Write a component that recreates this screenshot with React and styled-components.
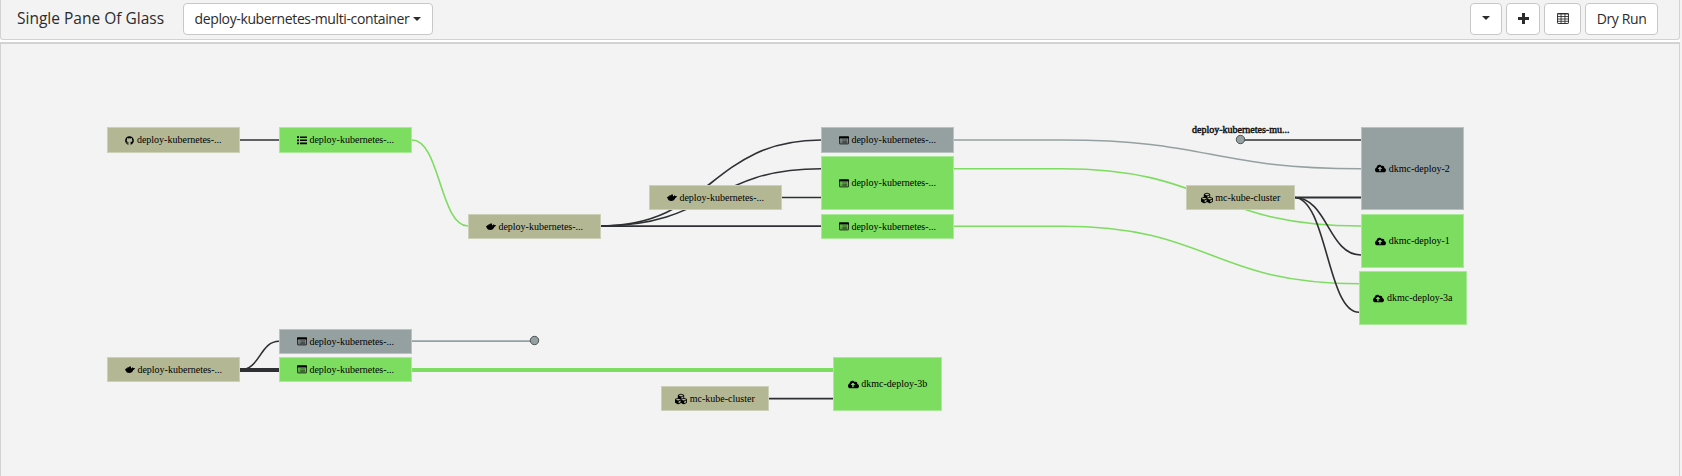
import React from "react";
import styled, { createGlobalStyle } from "styled-components";
import { FaGithub, FaCubes, FaCloudUploadAlt } from "react-icons/fa";

const GlobalStyle = createGlobalStyle`
  * { box-sizing: border-box; }
  body { margin: 0; background: #f3f3f3; overflow: hidden; }
`;

const palette = { material: "#b3b794", passed: "#7ddd60", idle: "#95a1a0", ink: "#2f3033" };

const Page = styled.div`
  width: 1682px;
  height: 476px;
  display: flex;
  flex-direction: column;
  padding-right: 2px;
  background: #f3f3f3;
  font-family: "Open Sans", sans-serif;
  color: #2b2b2b;
`;

const Toolbar = styled.header`
  height: 40px;
  flex: none;
  display: flex;
  align-items: flex-start;
  padding: 3px 21px 0 16px;
  border: solid #d2d2d2;
  border-width: 0 1px 1px 1px;
  border-radius: 0 0 4px 4px;
`;

const Divider = styled.div`
  height: 2px;
  flex: none;
  background: #fff;
`;

const Title = styled.h1`
  margin: 0;
  width: 166px;
  font-size: 15.5px;
  font-weight: 400;
  line-height: 31px;
  white-space: nowrap;
`;

const Button = styled.button`
  width: ${(p) => p.$width}px;
  height: 32px;
  padding: 0 0 ${(p) => (p.$icon ? 2 : 0)}px;
  display: flex;
  align-items: center;
  justify-content: center;
  gap: 4px;
  border: 1px solid #c8c8c8;
  border-radius: 4px;
  background: #fff;
  color: #2b2b2b;
  font: 400 14px/30px "Open Sans", sans-serif;
  letter-spacing: -0.38px;
  white-space: nowrap;
`;

const Actions = styled.div`
  display: flex;
  gap: 4px;
  margin-left: auto;
`;

const Canvas = styled.main`
  position: relative;
  flex: 1;
  border: solid #d2d2d2;
  border-width: 2px 1px 0 1px;
`;

const Edges = styled.svg`
  position: absolute;
  left: -1px;
  top: -44px;
  fill: none;
`;

const Node = styled.div`
  position: absolute;
  left: ${(p) => p.$x - 1}px;
  top: ${(p) => p.$y - 44}px;
  width: ${(p) => p.$w}px;
  height: ${(p) => p.$h}px;
  display: flex;
  align-items: center;
  justify-content: center;
  gap: 2.5px;
  background: ${(p) => palette[p.$kind]};
  border: 1px solid rgba(255, 255, 255, 0.35);
  color: #000;
  font: 10px/12px "Liberation Serif", serif;
  white-space: nowrap;
`;

const DotLabel = styled.div`
  position: absolute;
  left: 1191px;
  top: 80px;
  color: #111;
  font: 10px/12px "Liberation Serif", serif;
  -webkit-text-stroke: 0.45px #111;
  white-space: nowrap;
`;

const Caret = () => (
  <svg width="8" height="4" viewBox="0 0 8 4"><path d="M0 0h8L4 4z" fill="currentColor" /></svg>
);

const Plus = () => (
  <svg width="11" height="11" viewBox="0 0 11 11"><path d="M4 0h3v4h4v3H7v4H4V7H0V4h4z" fill="currentColor" /></svg>
);

const TableIcon = () => (
  <svg width="12" height="11" viewBox="0 0 13 11" preserveAspectRatio="none" fill="none" stroke="currentColor">
    <rect x="0.6" y="0.5" width="11.8" height="10" rx="0.6" />
    <path d="M0 1h13M0 3.5h13M0 6h13M0 8.3h13M4.4 0v11M8.6 0v11" strokeWidth="0.9" />
  </svg>
);

const ListIcon = () => (
  <svg width="10" height="9" viewBox="0 0 10 9"><path d="M0 0.3h2v1.8H0zM0 3.4h2v1.8H0zM0 6.5h2v1.8H0zM3 0.4h7v1.6H3zM3 3.5h7v1.6H3zM3 6.6h7v1.6H3z" /></svg>
);

const PipelineIcon = () => (
  <svg width="10" height="9" viewBox="0 0 10 9">
    <rect x="0.4" y="0.9" width="9.2" height="7" rx="0.5" fill="none" stroke="#000" strokeWidth="0.8" />
    <path d="M0 0.5h10v2H0z" />
    <path d="M1.5 3.9h1M3.2 3.9h5.2M1.5 5.3h1M3.2 5.3h5.2M1.5 6.7h1M3.2 6.7h5.2" stroke="#000" strokeWidth="0.8" opacity="0.8" />
  </svg>
);

const WhaleIcon = () => (
  <svg width="10" height="8" viewBox="0 0 10 8">
    <path d="M0 3.4 1.4 2.2h1V1.2h1.8V0.4h1.8v1.8h1L7.5 1l.7 1.1L10 1.9 9.4 3.3 8.3 3.9C7.7 5.8 6.3 6.9 4.2 6.9 2.5 6.9 1.3 6.2.9 4.9z" />
  </svg>
);

const icons = {
  github: <FaGithub size={9} />,
  list: <ListIcon />,
  pipeline: <PipelineIcon />,
  whale: <WhaleIcon />,
  cubes: <FaCubes size={12} />,
  cloud: <FaCloudUploadAlt size={11} />,
};

const short = "deploy-kubernetes-...";

const nodes = [
  [107, 127, 133, 26, "material", "github", short],
  [279, 127, 133, 26, "passed", "list", short],
  [468, 214, 133, 25, "material", "whale", short],
  [649, 185, 133, 25, "material", "whale", short],
  [821, 127, 133, 26, "idle", "pipeline", short],
  [821, 156, 133, 54, "passed", "pipeline", short],
  [821, 214, 133, 25, "passed", "pipeline", short],
  [1186, 185, 109, 25, "material", "cubes", "mc-kube-cluster"],
  [1361, 127, 103, 83, "idle", "cloud", "dkmc-deploy-2"],
  [1361, 214, 103, 54, "passed", "cloud", "dkmc-deploy-1"],
  [1359, 271, 108, 54, "passed", "cloud", "dkmc-deploy-3a"],
  [107, 357, 133, 25, "material", "whale", short],
  [279, 329, 133, 25, "idle", "pipeline", short],
  [279, 357, 133, 25, "passed", "pipeline", short],
  [833, 357, 109, 54, "passed", "cloud", "dkmc-deploy-3b"],
  [661, 386, 108, 25, "material", "cubes", "mc-kube-cluster"],
];

const edges = [
  ["M240 140H279", "ink", 1.7],
  ["M412 140C440 140 440 226 468 226", "passed", 1.6],
  ["M601 226C711 226 711 140 821 140", "ink", 1.6],
  ["M601 226C711 226 711 168.7 821 168.7", "ink", 1.6],
  ["M601 226.2H821", "ink", 1.7],
  ["M782 197.5H821", "ink", 1.7],
  ["M954 140H1062C1211 140 1211 168.7 1361 168.7", "idle", 1.6],
  ["M954 168.7H1062C1211 168.7 1211 226 1361 226", "passed", 1.6],
  ["M954 226.2H1062C1211 226.2 1211 283.7 1359 283.7", "passed", 1.6],
  ["M1241 140H1361", "ink", 1.6],
  ["M1294 197.5H1361", "ink", 1.8],
  ["M1294 197.5C1328 197.5 1328 255 1361 255", "ink", 1.6],
  ["M1294 197.5C1327 197.5 1327 312.3 1359 312.3", "ink", 1.6],
  ["M240 370C260 370 260 341.3 279 341.3", "ink", 1.6],
  ["M240 370H279", "ink", 4],
  ["M412 341.2H534", "idle", 1.7],
  ["M412 370H833", "passed", 4],
  ["M769 398.7H833", "ink", 1.8],
];

export default function App() {
  return (
    <Page>
      <GlobalStyle />
      <Toolbar>
        <Title>Single Pane Of Glass</Title>
        <Button $width={250}>deploy-kubernetes-multi-container<Caret /></Button>
        <Actions>
          <Button $width={32} $icon><Caret /></Button>
          <Button $width={34} $icon><Plus /></Button>
          <Button $width={37} $icon><TableIcon /></Button>
          <Button $width={73}>Dry Run</Button>
        </Actions>
      </Toolbar>
      <Divider />
      <Canvas>
        <Edges width="1670" height="470" viewBox="0 0 1670 470">
          {edges.map(([d, color, width]) => (
            <path key={d} d={d} stroke={palette[color]} strokeWidth={width} />
          ))}
          <circle cx="1240.5" cy="139.5" r="4.2" fill={palette.idle} stroke="#4c5353" />
          <circle cx="534.5" cy="340.5" r="4.2" fill={palette.idle} stroke="#4c5353" />
        </Edges>
        {nodes.map(([x, y, w, h, kind, icon, label]) => (
          <Node key={`${x}-${y}`} $x={x} $y={y} $w={w} $h={h} $kind={kind}>
            {icons[icon]}
            <span>{label}</span>
          </Node>
        ))}
        <DotLabel>deploy-kubernetes-mu...</DotLabel>
      </Canvas>
    </Page>
  );
}
